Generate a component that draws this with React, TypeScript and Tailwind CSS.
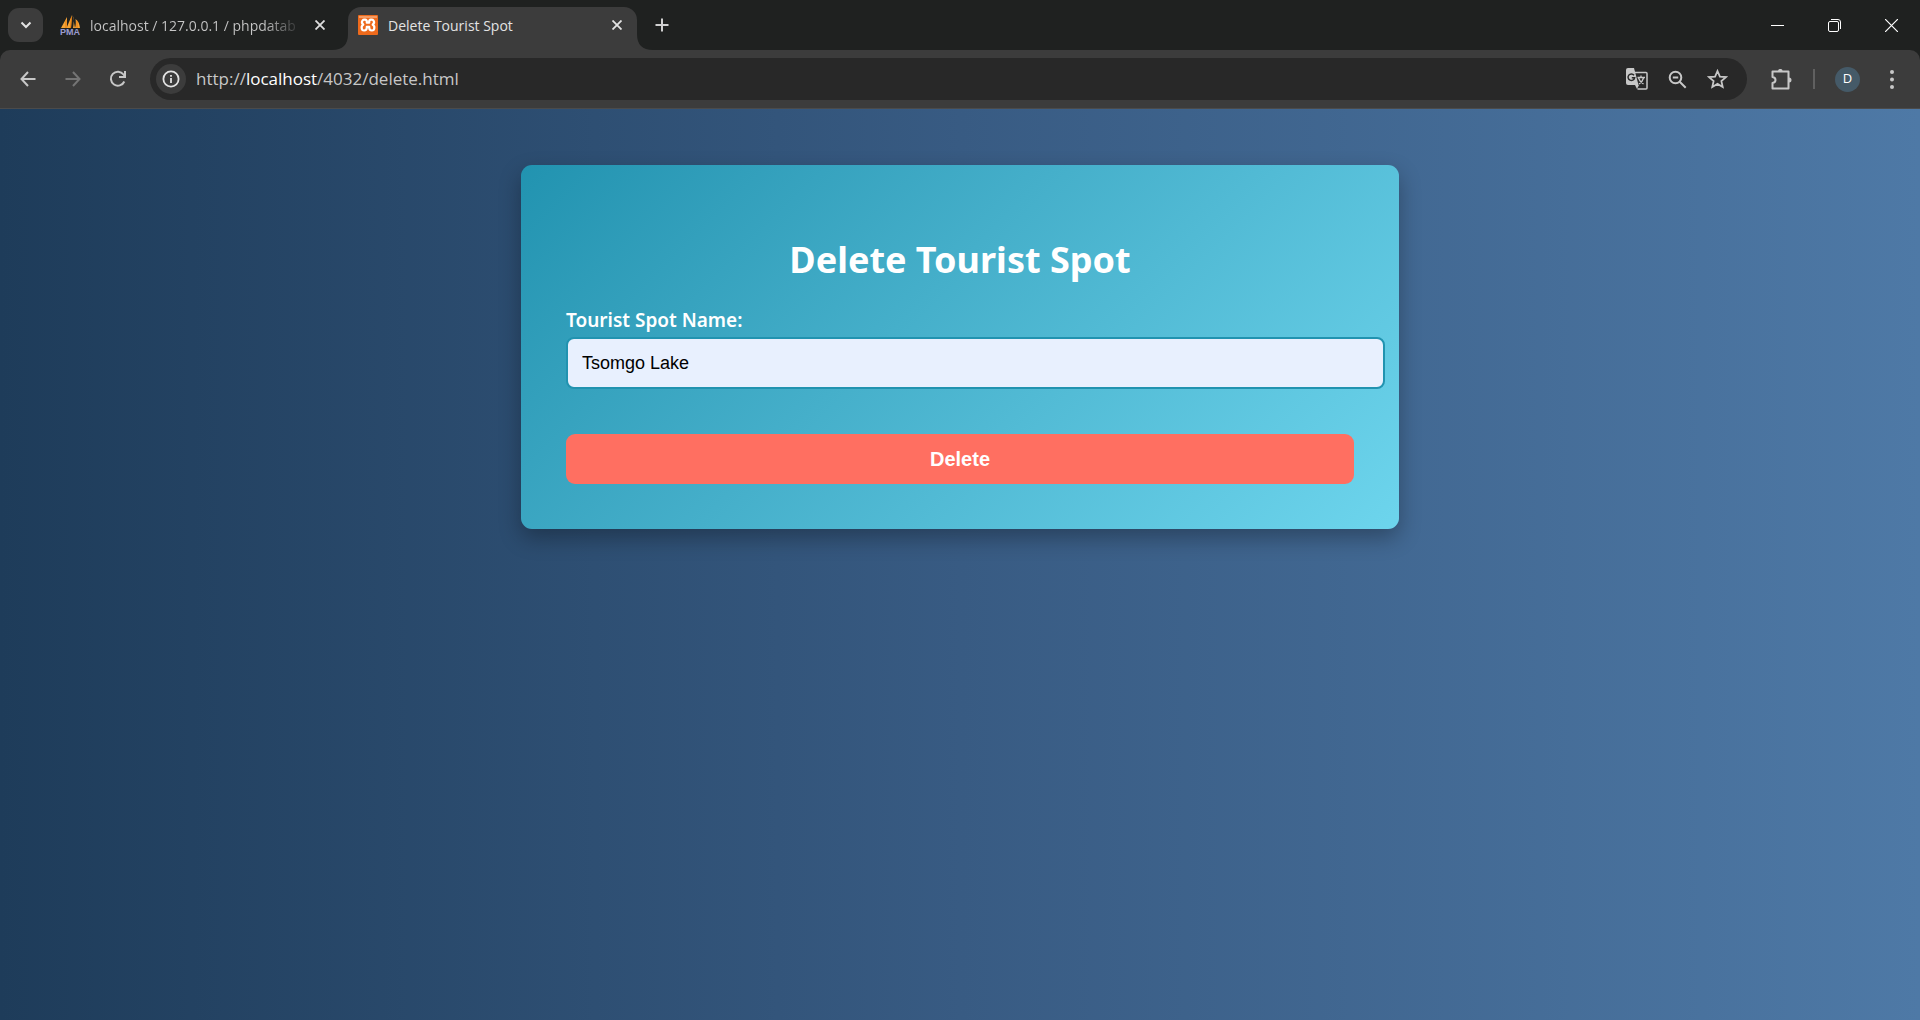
import { useState } from "react";

function SailIcon() {
  return (
    <svg width="20" height="20" viewBox="0 0 20 20" aria-hidden="true">
      <path d="M7 2 1 13h6zM12 0 6.500 13H11zM12.500 0c1.500 3 1.500 9 .5 13h2zM15.500 4c3 2 4 5 4.500 9h-5c1-3 1-6 .5-9z" fill="#f6a336" />
      <path d="M6 5v8M11.500 2 10.500 13M17 6v7" stroke="#e07a10" strokeWidth="1" />
      <text x="10" y="20" textAnchor="middle" fontSize="9" fontWeight="700" fill="#9a9cd0" fontFamily="Liberation Sans, sans-serif">PMA</text>
    </svg>
  );
}

function XamppIcon() {
  return (
    <svg width="20" height="20" viewBox="0 0 20 20" aria-hidden="true">
      <rect width="20" height="20" rx="1" fill="#ee6a1c" />
      <path d="M1 1h18v2H1z" fill="#f49b63" />
      <path d="M4.500 5.500C5.500 4 8.800 4.200 8.800 6.500v1.200h2.400V6.500c0-2.300 3.300-2.500 4.300-1 1 1.500.6 3-.8 4.200 2.300 1 2.300 5.800-.8 5.800-2 0-2.700-1.300-2.700-3v-.7H8.800v.7c0 1.700-.7 3-2.700 3-3.100 0-3.100-4.800-.8-5.800C3.900 8.500 3.500 7 4.500 5.500z" fill="none" stroke="#fff" strokeWidth="2.200" strokeLinejoin="round" />
    </svg>
  );
}

function CloseIcon() {
  return (
    <svg width="10" height="10" viewBox="0 0 10 10" fill="none" stroke="currentColor" strokeWidth="1.800" aria-hidden="true">
      <path d="m.5.5 9 9m0-9-9 9" />
    </svg>
  );
}

function TabStrip() {
  return (
    <header className="flex h-[50px] items-stretch bg-[#1f2120] pl-2 text-[#dedede]">
      <button aria-label="Search tabs" className="mt-2 mr-[17px] flex h-[34px] w-[35px] items-center justify-center rounded-[11px] bg-[#3c3c3c]">
        <svg width="12" height="8" viewBox="0 0 12 8" fill="none" stroke="#e3e3e3" strokeWidth="2" aria-hidden="true">
          <path d="m1.500 1.500 4.500 4.500 4.500-4.500" />
        </svg>
      </button>
      <div className="flex w-[270px] items-center">
        <SailIcon />
        <span className="ml-[10px] flex w-[209px] whitespace-nowrap text-[14px]">
          <span className="bg-linear-to-r from-[#c7c7c7] from-85% to-[#3a3b3b] bg-clip-text text-transparent">localhost / 127.0.0.1 / phpdatab</span>
        </span>
        <button aria-label="Close localhost tab" className="ml-4 text-[#dedede]"><CloseIcon /></button>
      </div>
      <div className="flex items-end">
        <svg className="ml-[2px]" width="16" height="16" viewBox="0 0 16 16" fill="#3c3c3c" aria-hidden="true"><path d="M16 0v16H0Q16 16 16 0z" /></svg>
        <div className="flex h-[43px] w-[289px] items-center rounded-t-[13px] bg-[#3c3c3c] pr-[15px] pb-[7px] pl-[10px]">
          <XamppIcon />
          <span className="ml-[10px] flex-1 text-[14px] text-[#e3e3e3]">Delete Tourist Spot</span>
          <button aria-label="Close Delete Tourist Spot tab" className="text-[#e3e3e3]"><CloseIcon /></button>
        </div>
        <svg width="16" height="16" viewBox="0 0 16 16" fill="#3c3c3c" aria-hidden="true"><path d="M0 0v16h16Q0 16 0 0z" /></svg>
      </div>
      <button aria-label="New tab" className="ml-[2px] text-[#d0d0d0]">
        <svg width="14" height="14" viewBox="0 0 14 14" fill="none" stroke="currentColor" strokeWidth="2" aria-hidden="true"><path d="M7 .5v13M.5 7h13" /></svg>
      </button>
      <div className="ml-auto flex items-center gap-[44px] pr-[22px] text-white">
        <button aria-label="Minimize">
          <svg width="13" height="13" viewBox="0 0 13 13" stroke="currentColor" aria-hidden="true"><path d="M0 6.500h13" /></svg>
        </button>
        <button aria-label="Restore">
          <svg width="13" height="13" viewBox="0 0 13 13" fill="none" stroke="currentColor" aria-hidden="true">
            <rect x=".5" y="2.500" width="10" height="10" rx="1.500" />
            <path d="M3 .5h7a2.500 2.500 0 0 1 2.500 2.500v7" />
          </svg>
        </button>
        <button aria-label="Close window">
          <svg width="13" height="13" viewBox="0 0 13 13" fill="none" stroke="currentColor" strokeWidth="1.200" aria-hidden="true"><path d="m0 0 13 13M13 0 0 13" /></svg>
        </button>
      </div>
    </header>
  );
}

function Toolbar() {
  return (
    <div className="bg-[#1f2120]">
      <div className="flex h-[59px] items-center rounded-t-[10px] border-b border-[#4b4b4b] bg-[#3c3c3c] pr-[26px] pl-[20px] text-[#c7c7c7]">
        <button aria-label="Back">
          <svg width="16" height="16" viewBox="0 0 16 16" fill="none" stroke="currentColor" strokeWidth="2" aria-hidden="true"><path d="M15.500 8H1.500M8 1 1.500 8 8 15" /></svg>
        </button>
        <button aria-label="Forward" disabled className="ml-[29px] text-[#747474]">
          <svg width="16" height="16" viewBox="0 0 16 16" fill="none" stroke="currentColor" strokeWidth="2" aria-hidden="true"><path d="M.5 8h14M8 1l6.500 7L8 15" /></svg>
        </button>
        <button aria-label="Reload" className="ml-[28px]">
          <svg width="18" height="18" viewBox="0 0 18 18" fill="none" stroke="currentColor" strokeWidth="2" aria-hidden="true"><path d="M15.300 11.500A7 7 0 1 1 14.500 4.500L16 6.500M16 1v6h-6" /></svg>
        </button>
        <div className="ml-[23px] flex h-[42px] flex-1 items-center rounded-full bg-[#282828] pr-[19px] pl-[6px]">
          <button aria-label="Site information" className="flex size-[30px] items-center justify-center rounded-full bg-[#3c3c3c] text-[#e3e3e3]">
            <svg width="18" height="18" viewBox="0 0 18 18" fill="none" stroke="currentColor" strokeWidth="1.800" aria-hidden="true">
              <circle cx="9" cy="9" r="7.600" /><path d="M9 8v5M9 5v1.800" />
            </svg>
          </button>
          <a href="#" className="ml-[10px] text-[17px] text-[#c7c7c7]">http://<span className="text-white">localhost</span>/4032/delete.html</a>
          <div className="ml-auto flex items-center gap-[20px]">
            <button aria-label="Translate this page">
              <svg width="22" height="22" viewBox="0 0 22 22" aria-hidden="true">
                <path d="M9 4.500h11q1 0 1 1v14.500q0 1-1 1h-8.500" fill="none" stroke="#c7c7c7" strokeWidth="1.500" />
                <path d="M2 0h6l4.500 17H2q-2 0-2-2V2q0-2 2-2z" fill="#c7c7c7" />
                <path d="m9 17 4 0-2 4z" fill="#c7c7c7" />
                <path d="M8 7.200A3.300 3.300 0 1 0 8.600 9.800H5.800" fill="none" stroke="#282828" strokeWidth="1.500" />
                <path d="M11.500 9.500H19M15 7.500v2M12.500 10c.8 2.500 2.500 4.500 5 6M17.500 10c-.5 2.500-2.500 4.500-4.500 6" fill="none" stroke="#c7c7c7" strokeWidth="1.300" />
              </svg>
            </button>
            <button aria-label="Zoom">
              <svg width="19" height="19" viewBox="0 0 19 19" fill="none" stroke="currentColor" strokeWidth="2" aria-hidden="true"><circle cx="7.500" cy="7.500" r="5.800" /><path d="m11.700 11.700 6 6M4.800 7.500h5.400" /></svg>
            </button>
            <button aria-label="Bookmark this tab">
              <svg width="21" height="20" viewBox="0 0 21 20" fill="none" stroke="currentColor" strokeWidth="1.800" aria-hidden="true"><path d="m10.500 2 2.400 5.600 6 .5-4.500 4 1.300 5.900-5.200-3.100L5.300 18l1.300-5.900-4.500-4 6-.5z" /></svg>
            </button>
          </div>
        </div>
        <button aria-label="Extensions" className="ml-[24px]">
          <svg width="21" height="21" viewBox="0 0 21 21" aria-hidden="true">
            <path d="M1.500 2.500h16v17h-16v-5.500q3-.5 3-3t-3-3z" fill="none" stroke="currentColor" strokeWidth="2" strokeLinejoin="round" />
            <path d="M7 2.200a2.300 2.300 0 0 1 4.600 0zM18 8.500a2.500 2.500 0 0 1 0 5z" fill="currentColor" />
          </svg>
        </button>
        <span className="ml-[21px] h-5 w-[2px] bg-[#606060]" />
        <button aria-label="Profile" className="ml-[20px] flex size-[25px] items-center justify-center rounded-full bg-[#455a68] text-[13px] text-white">D</button>
        <button aria-label="Menu" className="ml-[30px]">
          <svg width="4" height="19" viewBox="0 0 4 19" fill="currentColor" aria-hidden="true"><circle cx="2" cy="2" r="2" /><circle cx="2" cy="9.500" r="2" /><circle cx="2" cy="17" r="2" /></svg>
        </button>
      </div>
    </div>
  );
}

function DeleteForm() {
  const [name, setName] = useState("Tsomgo Lake");
  return (
    <form onSubmit={(e) => e.preventDefault()} className="w-full max-w-[878px] rounded-[11px] bg-linear-135 from-[#2193b0] to-[#6dd5ed] px-[45px] pt-[69px] pb-[45px] shadow-[0_9px_22px_rgba(0,0,0,0.3)] font-['Noto_Sans',sans-serif]">
      <h1 className="text-center text-[36px] leading-[52px] font-bold text-white">Delete Tourist Spot</h1>
      <label htmlFor="spot" className="mt-[19px] mb-[2px] block text-[19px] leading-[30px] font-semibold text-white">Tourist Spot Name:</label>
      <div className="-mr-[31px]">
        <input id="spot" value={name} onChange={(e) => setName(e.target.value)} className="h-[52px] w-full rounded-lg border-2 border-[#2193b0] bg-[#e8f0fe] px-[14px] font-['Liberation_Sans',sans-serif] text-[18px] text-black" />
      </div>
      <button type="submit" className="mt-[45px] h-[50px] w-full rounded-[9px] bg-[#ff6f61] font-['Liberation_Sans',sans-serif] text-[20px] font-bold text-white">Delete</button>
    </form>
  );
}

export default function App() {
  return (
    <div className="flex min-h-screen flex-col font-['Open_Sans',sans-serif]">
      <TabStrip />
      <Toolbar />
      <main className="flex flex-1 items-start justify-center bg-linear-to-r from-[#1e3c5a] via-[#385b83] to-[#4e79a6] pt-[56px]">
        <DeleteForm />
      </main>
    </div>
  );
}
